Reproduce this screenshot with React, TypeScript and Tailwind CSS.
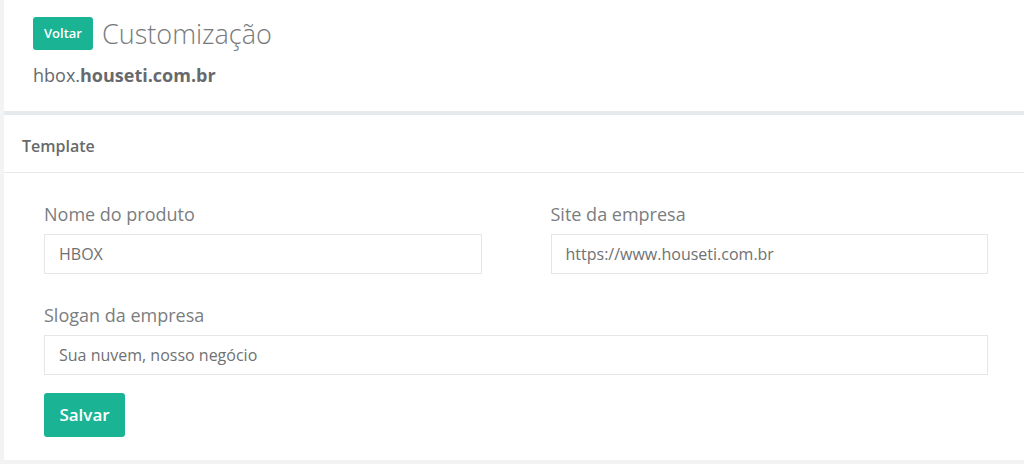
import React from 'react';

const font = { fontFamily: '"Open Sans", "Liberation Sans", sans-serif' };

interface FieldProps {
  label: string;
  value: string;
}

const Field: React.FC<FieldProps> = ({ label, value }) => (
  <div className="flex flex-col">
    <label className="text-[18px] leading-[24px] text-[#7b7d7f] mb-[8px]">{label}</label>
    <div className="h-[40px] border border-[#e5e6e7] bg-white px-[14px] flex items-center text-[16px] text-[#6f7173]">
      {value}
    </div>
  </div>
);

export default function App() {
  return (
    <div className="h-[464px] bg-[#f3f3f4] pl-[4px] pb-[4px] flex flex-col" style={font}>
      {/* Page heading */}
      <div className="bg-white h-[111px] pl-[29px] pt-[17px]">
        <div className="flex items-center gap-[9px]">
          <button className="h-[33px] w-[60px] rounded-[3px] bg-[#1ab394] text-white text-[13px] font-semibold">
            Voltar
          </button>
          <h1 className="text-[27px] font-light text-[#777a7c] leading-[33px]">Customização</h1>
        </div>
        <div className="mt-[12px] text-[18px] leading-[26px] text-[#676a6c]">
          hbox.<span className="font-bold">houseti.com.br</span>
        </div>
      </div>

      {/* Panel */}
      <div className="flex-1 bg-white border-t-[4px] border-[#e7eaec] flex flex-col">
        <div className="h-[58px] border-b border-[#e7eaec] pl-[18px] flex items-center">
          <h5 className="text-[16px] font-semibold text-[#676a6c] mt-[4px]">Template</h5>
        </div>
        <div className="pl-[40px] pr-[36px] pt-[29px]">
          <div className="grid grid-cols-2 gap-x-[69px]">
            <Field label="Nome do produto" value="HBOX" />
            <Field label="Site da empresa" value="https://www.houseti.com.br" />
          </div>
          <div className="mt-[29px]">
            <Field label="Slogan da empresa" value="Sua nuvem, nosso negócio" />
          </div>
          <button className="mt-[18px] h-[44px] w-[81px] rounded-[3px] bg-[#1ab394] text-white text-[17px] font-semibold">
            Salvar
          </button>
        </div>
      </div>
    </div>
  );
}
